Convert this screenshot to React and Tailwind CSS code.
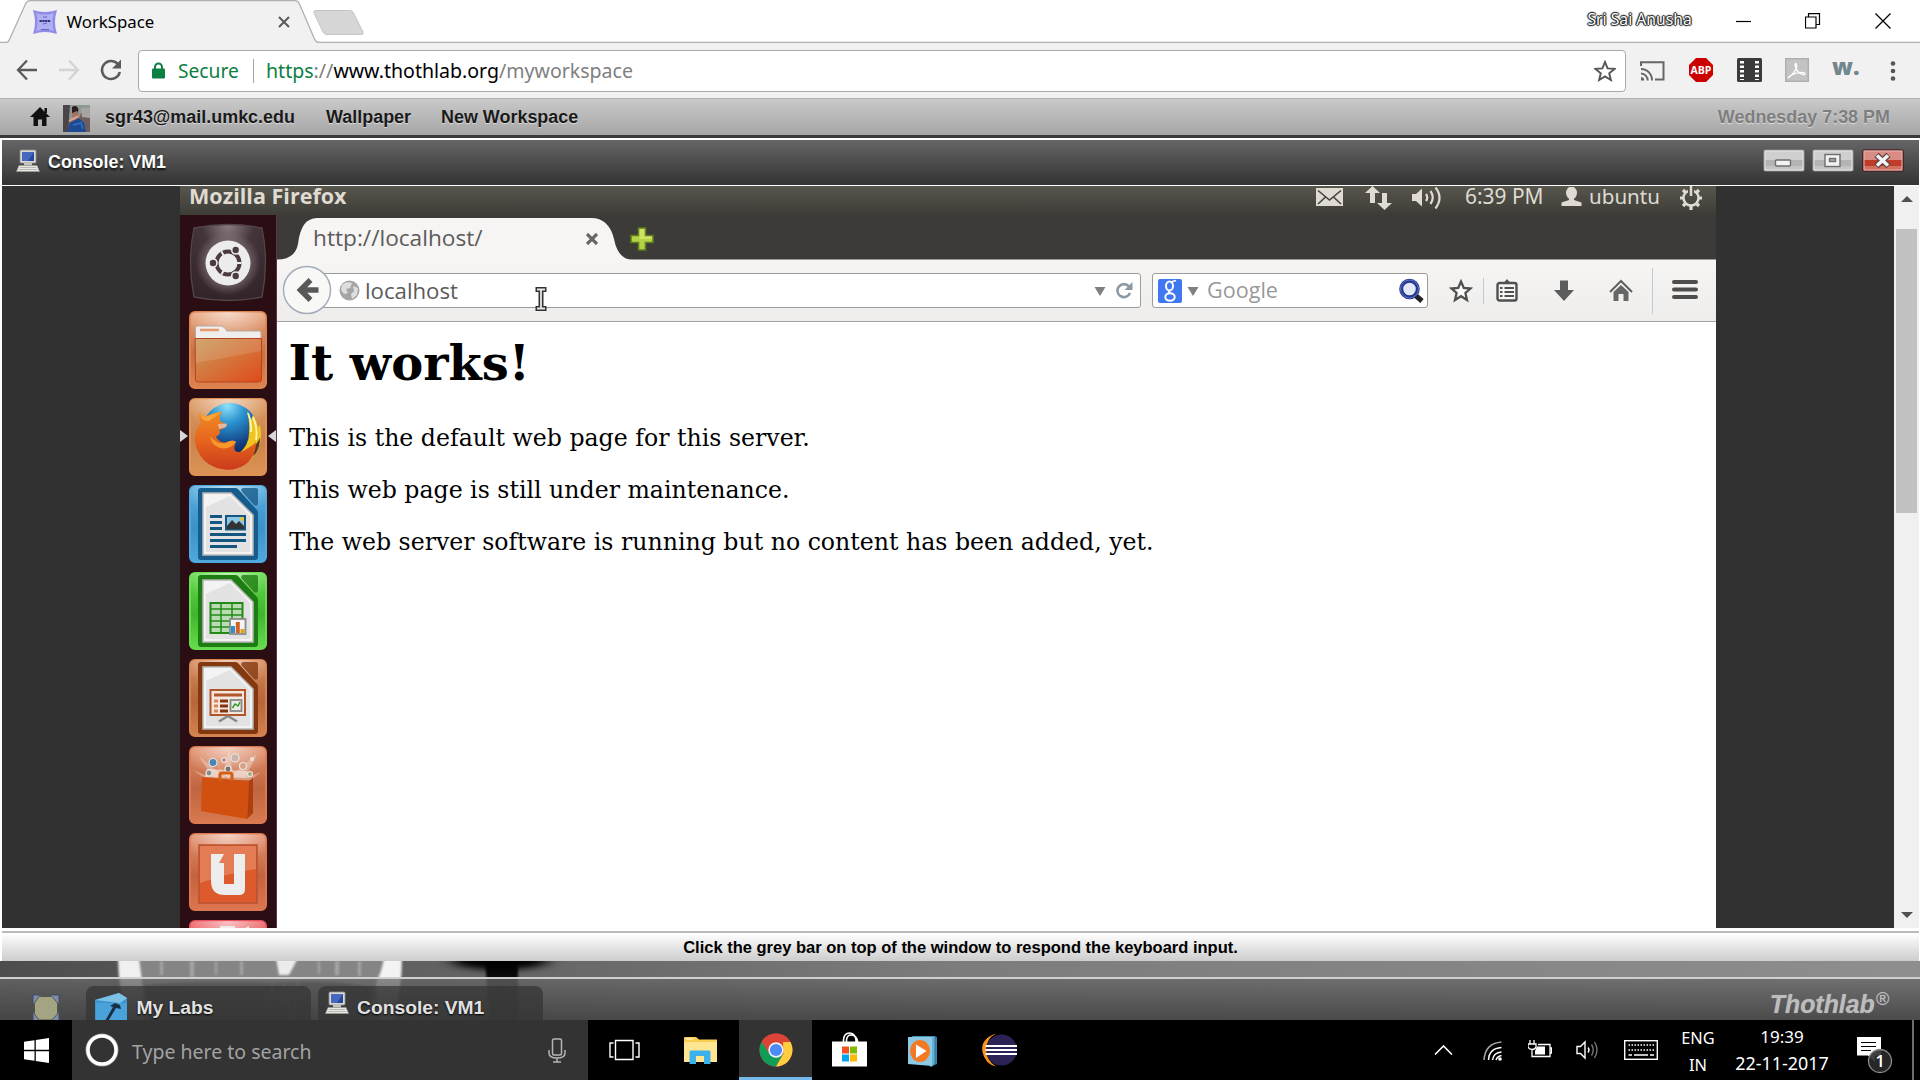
import React from "react";

const I = ({ w, h, className = "", vb, children }) => (
  <svg width={w} height={h} viewBox={vb || `0 0 ${w} ${h}`} className={`shrink-0 ${className}`} fill="none">
    {children}
  </svg>
);

/* ---------- Browser chrome ---------- */

function TabStrip() {
  return (
    <div className="relative flex h-[43px] shrink-0 items-center bg-white">
      <svg className="absolute left-0 top-0" width="1920" height="43" viewBox="0 0 1920 43" fill="none">
        <path d="M0 42.5H6Q8.500 42.500 9.500 39.500L25.500 4Q27 .7 30 .7H295Q298 .7 299.500 4L314.500 39Q316 42.500 319 42.500H1920V43H0Z" fill="#f1f1f1" />
        <path d="M0 42.500H6Q8.500 42.500 9.500 39.500L25.500 4Q27 .7 30 .7H295Q298 .7 299.500 4L314.500 39Q316 42.500 319 42.500H1920" stroke="#b0b0b0" strokeWidth="1.300" />
        <path d="M316 10.500H350Q352.500 10.500 353.500 13L363 32Q364 34.500 361 34.500H327Q324 34.500 323 32L314 13Q313 10.500 316 10.500Z" fill="#d6d6d6" stroke="#c4c4c4" />
      </svg>
      <I w={24} h={24} className="relative ml-[33px] mt-[1px]">
        <path d="M0 0Q12 4 24 0Q20 12 24 24Q12 20 0 24Q4 12 0 0Z" fill="#8f8ce8" />
        <path d="M3 3Q12 6 21 3Q18 12 21 21Q12 18 3 21Q6 12 3 3Z" fill="#b0aff3" />
        <path d="M10 7H14M10 14L14 13M8 19.500H16" stroke="#6a68c0" strokeWidth="1.200" />
        <path d="M6.500 11H17.500" stroke="#34327e" strokeWidth="2.200" strokeDasharray="2.300 .5" />
      </I>
      <span className="relative ml-[9.500px] w-[211px] whitespace-nowrap text-[16.800px] text-black">WorkSpace</span>
      <I w={12} h={12} className="relative mt-[1px]"><path d="M1 1L11 11M11 1L1 11" stroke="#5a5a5a" strokeWidth="2" /></I>
      <span className="relative mb-[4px] ml-[1298px] w-[104px] whitespace-nowrap text-[15.700px] text-white [text-shadow:0_0_1px_#111,0_0_2px_#222,1px_0_1px_#222,-1px_0_1px_#222,0_1px_1px_#222,0_-1px_1px_#222]">Sri Sai Anusha</span>
      <I w={16} h={16} className="relative ml-[44px]"><path d="M0 7.500H15" stroke="#000" strokeWidth="1.200" /></I>
      <I w={16} h={16} className="relative mb-[2px] ml-[53px]"><path d="M.5 4H11V15H.5ZM3.500 4V.7H14.500V11.500H11" stroke="#000" strokeWidth="1.200" /></I>
      <I w={16} h={16} className="relative mb-[2px] ml-[54px]"><path d="M.5 .5L15.500 15.500M15.500 .5L.5 15.500" stroke="#000" strokeWidth="1.300" /></I>
    </div>
  );
}

function Toolbar() {
  return (
    <div className="flex h-[55px] shrink-0 items-center bg-[#f1f1f1]">
      <I w={22} h={22} className="mb-[2px] ml-[16px]"><path d="M21 11H2M11 1.500L2 11L11 20.500" stroke="#5a5a5a" strokeWidth="2.300" /></I>
      <I w={22} h={22} className="mb-[2px] ml-[20px]"><path d="M1 11H20M11 1.500L20 11L11 20.500" stroke="#d3d3d3" strokeWidth="2.300" /></I>
      <I w={24} h={24} className="mb-[2px] ml-[19px]">
        <path d="M19.500 7A9 9 0 1 0 20.800 14" stroke="#5a5a5a" strokeWidth="2.500" />
        <path d="M22 1.500V10.500H13Z" fill="#5a5a5a" />
      </I>
      <div className="ml-[15px] flex h-[42px] w-[1488px] items-center rounded-[4px] border-[1.500px] border-[#a9a9a9] bg-white">
        <I w={13} h={17} className="mb-px ml-[13px]">
          <path d="M3 8V5A3.500 3.500 0 0 1 10 5V8" stroke="#0b8043" strokeWidth="2" />
          <rect y="6.500" width="13" height="10" rx="1" fill="#0b8043" />
        </I>
        <span className="ml-[13px] mt-px w-[75px] text-[19.200px] text-[#0b8043]">Secure</span>
        <div className="mr-[12px] h-[24px] w-px bg-[#a5a5a5]" />
        <span className="mt-px w-[1328px] whitespace-nowrap text-[19.560px] text-black">
          <span className="text-[#0b8043]">https</span><span className="text-[#808080]">://</span>www.thothlab.org<span className="text-[#808080]">/myworkspace</span>
        </span>
        <I w={22} h={22}>
          <path d="M11 2L13.600 8.400L20.500 8.900L15.200 13.300L16.900 20L11 16.400L5.100 20L6.800 13.300L1.500 8.900L8.400 8.400Z" stroke="#555" strokeWidth="1.900" />
        </I>
      </div>
      <I w={25} h={20} className="ml-[14px]">
        <path d="M1 5V1.200H23.500V18.500H15" stroke="#666" strokeWidth="2" />
        <path d="M1 8A11 11 0 0 1 12 19.500M1 12.500A7 7 0 0 1 7.700 19.500" stroke="#666" strokeWidth="1.900" />
        <path d="M1 16V19.500H4.300A3.500 3.500 0 0 0 1 16Z" fill="#666" />
      </I>
      <I w={26} h={26} className="mb-px ml-[23px]">
        <path d="M8 1H18L25 8V18L18 25H8L1 18V8Z" fill="#cd0000" />
        <text x="13" y="17" textAnchor="middle" fontSize="10.500" fontWeight="bold" fontFamily="Open Sans" fill="#fff" textLength="21" lengthAdjust="spacingAndGlyphs">ABP</text>
      </I>
      <I w={25} h={24} className="mb-px ml-[23px]">
        <rect width="25" height="24" rx="1.500" fill="#3b3b3b" />
        <path d="M5 3V22M20 3V22" stroke="#fff" strokeWidth="4" strokeDasharray="2.500 2" />
      </I>
      <I w={24} h={24} className="mb-px ml-[23px]">
        <rect x=".7" y=".7" width="22.600" height="22.600" fill="#c3c3c3" stroke="#aeaeae" strokeWidth="1.400" />
        <path d="M4 19C9 16 12.500 10 11.500 6.500C11 4.500 9.500 5.500 10.200 8C11.500 12.500 14 15.500 18 16.500C21 17 20.500 14.500 17.500 14.300C13 14.200 9 15.500 5.500 17.500C3.500 18.800 3.500 20 4.500 19Z" stroke="#fff" strokeWidth="1.300" />
      </I>
      <span className="mb-[9px] ml-[23px] w-[26px] font-['Open_Sans'] text-[23px] font-extrabold leading-none text-[#71868f]">w.</span>
      <I w={6} h={20} className="ml-[32px]"><g fill="#555"><circle cx="3" cy="2.500" r="2.300" /><circle cx="3" cy="10" r="2.300" /><circle cx="3" cy="17.500" r="2.300" /></g></I>
    </div>
  );
}

/* ---------- Thothlab desktop ---------- */

const Computer = () => (
  <I w={24} h={24}>
    <rect x="4" y="1" width="16" height="13" rx="1" fill="#d9d9d4" stroke="#8f8f8a" strokeWidth=".8" />
    <rect x="6" y="3" width="12" height="9" fill="#27479f" />
    <path d="M6 3H18L12 12H6Z" fill="#4668bd" />
    <path d="M8 14H16V16.500H8Z" fill="#c4c4be" />
    <path d="M3 16.500H21L23.500 22.500H.5Z" fill="#e9e9e4" stroke="#999" strokeWidth=".7" />
    <path d="M4 18.500H20M3 20.500H21" stroke="#b9b9b4" />
  </I>
);

function MenuBar() {
  return (
    <div className="flex h-[37px] shrink-0 items-center border-t border-[#b0b0b0] bg-gradient-to-b from-[#c9c9c9] to-[#a6a6a6] font-['Liberation_Sans',sans-serif] text-[17.950px] font-bold text-[#1a1a1a]">
      <I w={20} h={19} className="mb-[2px] ml-[30px]"><path d="M10 0L20 10H16.500V19H12V12.500H8V19H3.500V10H0Z" fill="#111" /><path d="M14.500 1H17V6H14.500Z" fill="#111" /></I>
      <I w={27} h={27} className="ml-[13px] mt-[2px]">
        <rect width="27" height="27" fill="#6d5e60" />
        <path d="M0 0H27V9L18 8L16 14H0Z" fill="#8c9a93" />
        <path d="M18 3H27V13L19 12Z" fill="#a9a39f" />
        <path d="M0 0H7L5 27H0Z" fill="#4b4448" />
        <path d="M9 2Q14 -1 15.500 5L14 9H9Z" fill="#2a1d1f" />
        <path d="M9 8L14 6L17 13L10 16Z" fill="#a8705f" />
        <path d="M4 27L7 18L16 13L21 18L23 27H4Z" fill="#1e4a92" />
        <path d="M6 16L12 13L15 11" stroke="#d7a995" strokeWidth="2" />
        <path d="M10 20L18 18L20 24" stroke="#3570c4" strokeWidth="1.500" />
      </I>
      <span className="ml-[15px] w-[221px] [text-shadow:0_1px_1px_#ddd]">sgr43@mail.umkc.edu</span>
      <span className="w-[115px] [text-shadow:0_1px_1px_#ddd]">Wallpaper</span>
      <span className="[text-shadow:0_1px_1px_#ddd]">New Workspace</span>
      <span className="ml-auto mr-[30px] text-[#7e7e7e] [text-shadow:0_1px_1px_#ddd]">Wednesday 7:38 PM</span>
    </div>
  );
}

function WinButton({ red, className = "", children }) {
  return (
    <I w={42} h={23} className={className}>
      <rect x="1" y="1" width="40" height="21" rx="1.500" fill={red ? "#d98b84" : "#cfcfcf"} stroke={red ? "#3a0a12" : "#8a8a8a"} strokeWidth="1.200" />
      <rect x="2" y="11" width="38" height="10" fill={red ? "#bf3c28" : "#b4b4b4"} />
      <rect x="2" y="17" width="38" height="4" fill={red ? "#d4705f" : "#c4c4c4"} />
      <rect x="2" y="2" width="38" height="19" stroke={red ? "#eab3ad" : "#e4e4e4"} />
      {children}
    </I>
  );
}

function TitleBar() {
  return (
    <div className="ml-[2px] mr-px flex h-[45px] shrink-0 items-center bg-gradient-to-b from-[#666] to-[#333]">
      <div className="mb-[4px] ml-[14px]"><Computer /></div>
      <span className="mb-px ml-[8px] font-['Liberation_Sans',sans-serif] text-[17.850px] font-bold text-white [text-shadow:0_2px_2px_#111]">Console: VM1</span>
      <WinButton className="mb-[5px] ml-auto"><rect x="12.500" y="11" width="15" height="6" rx="1" fill="#f2f2f2" stroke="#6d6d6d" strokeWidth="1.400" /></WinButton>
      <WinButton className="mb-[5px] ml-[7px]">
        <rect x="13" y="5.500" width="15" height="12" fill="#f2f2f2" stroke="#6d6d6d" strokeWidth="1.400" />
        <rect x="17.500" y="9.500" width="6" height="3" fill="#aaa" stroke="#6d6d6d" strokeWidth="1.400" />
      </WinButton>
      <WinButton red className="mb-[5px] ml-[8px] mr-[15px]">
        <path d="M14.500 6L26.500 17M26.500 6L14.500 17" stroke="#5b4347" strokeWidth="6" />
        <path d="M15 6.500L26 16.500M26 6.500L15 16.500" stroke="#f3f3f3" strokeWidth="3.600" />
      </WinButton>
    </div>
  );
}

/* ---------- Ubuntu launcher ---------- */

const Tile = ({ id, c1, c2, c3, children, className = "" }) => (
  <I w={78} h={78} className={className}>
    <defs>
      <linearGradient id={id} x1="0" y1="0" x2="0" y2="1">
        <stop offset="0" stopColor={c1} /><stop offset=".55" stopColor={c2} /><stop offset="1" stopColor={c3} />
      </linearGradient>
      <radialGradient id={id + "g"} cx=".5" cy="0" r=".6">
        <stop offset="0" stopColor="#fff" stopOpacity=".6" /><stop offset="1" stopColor="#fff" stopOpacity="0" />
      </radialGradient>
    </defs>
    <rect x="1" y="1" width="76" height="76" rx="5" fill={`url(#${id})`} stroke={c3} strokeWidth="2" />
    <rect x="1" y="1" width="76" height="50" rx="5" fill={`url(#${id}g)`} />
    {children}
  </I>
);

const Doc = ({ frame }) => (
  <g>
    <path d="M9 6Q9 3 12 3H46Q48 3 49 4L68 25Q69 26 69 28V72Q69 75 66 75H12Q9 75 9 72Z" fill={frame} />
    <path d="M14 8H42L64 30V70H14Z" fill="#f3f3f3" stroke="#b8b8b8" strokeWidth="1.500" />
    <path d="M17 22L41 11L61 31V67H17Z" fill="#d4d4d4" opacity=".55" />
    <path d="M54 3H67Q69 3 69 5V19Q68 22 65 20L53 7Q51 4 54 3Z" fill={frame} opacity=".8" />
  </g>
);

function Launcher() {
  return (
    <div className="relative flex h-full w-[97px] shrink-0 flex-col items-center gap-[9px] overflow-hidden border-r border-[#5f3349] bg-[#2b0d14] pt-[9px]">
      <I w={78} h={79} className="-mt-px">
        <defs>
          <radialGradient id="bfb" cx=".5" cy="0" r="1"><stop offset="0" stopColor="#8a7d80" /><stop offset=".35" stopColor="#44353a" /><stop offset="1" stopColor="#33242a" /></radialGradient>
          <radialGradient id="bfbg"><stop offset=".55" stopColor="#8a7d80" stopOpacity=".7" /><stop offset=".95" stopColor="#8a7d80" stopOpacity="0" /></radialGradient>
        </defs>
        <path d="M5 5Q39 -2 73 5Q80 39 73 74Q39 81 5 74Q-2 39 5 5Z" fill="url(#bfb)" stroke="#53444a" strokeWidth="1.300" />
        <circle cx="39" cy="40" r="34" fill="url(#bfbg)" />
        <circle cx="39" cy="40" r="22.500" fill="#ececec" />
        <circle cx="39" cy="40" r="11.500" stroke="#4b3a3f" strokeWidth="4" />
        <path d="M52.500 40H48M32.300 28.300L34.500 32.300M32.300 51.700L34.500 47.700" stroke="#ececec" strokeWidth="2" />
        <circle cx="24" cy="40" r="4.800" fill="#ececec" /><circle cx="46.700" cy="27" r="4.800" fill="#ececec" /><circle cx="46.700" cy="53" r="4.800" fill="#ececec" />
        <circle cx="24" cy="40" r="3.200" fill="#4b3a3f" /><circle cx="46.700" cy="27" r="3.200" fill="#4b3a3f" /><circle cx="46.700" cy="53" r="3.200" fill="#4b3a3f" />
      </I>
      <Tile id="t1" c1="#e8a47c" c2="#c56f42" c3="#dc8350">
        <defs>
          <linearGradient id="fold" x1="0" y1="0" x2="1" y2="1"><stop offset="0" stopColor="#c89a5c" /><stop offset=".5" stopColor="#d5743a" /><stop offset="1" stopColor="#e04a1c" /></linearGradient>
        </defs>
        <path d="M6.500 17Q6.500 15 8.500 15H32Q35 15 38 20H71Q72 20 72 22V28H6.500Z" fill="#f0eeec" stroke="#b7a79e" />
        <path d="M11 19H30" stroke="#e79a6e" strokeWidth="2.500" />
        <path d="M6 27.500H72.500V68Q72.500 71 70 71H9Q6.500 71 6.500 68Z" fill="url(#fold)" stroke="#b9431c" />
        <path d="M7 28H72V40L7 52Z" fill="#fff" opacity=".12" />
      </Tile>
      <Tile id="t2" c1="#dd9a63" c2="#c9834b" c3="#de9355">
        <defs>
          <radialGradient id="globe" cx=".45" cy=".05" r=".9"><stop offset="0" stopColor="#8fe2fa" /><stop offset=".35" stopColor="#2b93cf" /><stop offset=".8" stopColor="#123d80" /><stop offset="1" stopColor="#0c2458" /></radialGradient>
          <linearGradient id="fox" x1="0" y1="0" x2="0" y2="1"><stop offset="0" stopColor="#f08b24" /><stop offset=".5" stopColor="#e6641e" /><stop offset="1" stopColor="#cb3a1c" /></linearGradient>
        </defs>
        <circle cx="41" cy="33" r="28" fill="url(#globe)" />
        <path d="M58 13Q61 17 62 22L64 17Q68 22 69 29L71 27Q74 40 69 51Q65 60 56 66L48 57Q61 48 60 33Q61 24 58 13Z" fill="#f0c41f" />
        <path d="M59 15Q63 24 62 34M64 19Q69 30 67 42" stroke="#fdf5b0" strokeWidth="1.800" />
        <path d="M66 48L71 40Q71 48 67 55L64 58Z" fill="#5b3a23" />
        <path d="M11 14Q13 19 18 18Q25 14 33 14Q30 19 31 23L38 27Q36 31 30 32Q33 35 27 39Q31 46 38 44Q44 41 47 44Q42 55 52 54Q62 49 67 44Q67 58 57 66Q44 75 28 70Q10 64 6 44Q5 32 12 25Q9 20 11 14Z" fill="url(#fox)" />
        <path d="M11 14Q13 20 19 18Q26 15 32 14Q25 20 20 23Q12 24 11 14Z" fill="#f6a73a" />
        <path d="M21 38Q28 47 37 45Q43 41 47 44Q41 52 31 50Q22 47 21 38Z" fill="#f59a2a" />
        <path d="M29 26L38 25.500L37 29L30 31Z" fill="#e9b79d" />
      </Tile>
      <Tile id="t3" c1="#5aaede" c2="#3b92c9" c3="#4fa9de">
        <Doc frame="#155c8c" />
        <path d="M21 31.500H33M21 37.500H33M21 43.500H33M21 49.500H57M21 55.500H57M21 61.500H48" stroke="#14567f" strokeWidth="3" />
        <rect x="37" y="31" width="19" height="13.500" fill="#8cc7e8" stroke="#14567f" strokeWidth="2" />
        <path d="M38 44V41L43 35L47 39L50 36L55 41V44Z" fill="#333" /><circle cx="53" cy="34" r="2" fill="#e8c52a" />
      </Tile>
      <Tile id="t4" c1="#63d84c" c2="#41b52c" c3="#68dc4f">
        <Doc frame="#1e7d12" />
        <rect x="21.500" y="31" width="32" height="30" fill="#b9dcb2" stroke="#238a18" strokeWidth="2" />
        <path d="M21 37H54M21 43H54M21 49H54M21 55H54M32 31V61M43 31V61" stroke="#238a18" strokeWidth="1.500" />
        <rect x="41" y="47" width="15.500" height="15" fill="#f5f5f5" stroke="#8b8b8b" strokeWidth="1.800" />
        <path d="M44 61V54" stroke="#2f8fd0" strokeWidth="4" /><path d="M48.800 61V50" stroke="#d0631e" strokeWidth="4" /><path d="M53.500 61V57" stroke="#dba714" strokeWidth="4" />
      </Tile>
      <Tile id="t5" c1="#d68a5a" c2="#b4663a" c3="#d5834f">
        <Doc frame="#84380f" />
        <rect x="21.500" y="31" width="34.500" height="25" fill="#f4e7de" stroke="#b2552a" strokeWidth="2" />
        <path d="M25 36H53" stroke="#b2552a" strokeWidth="3" />
        <path d="M25 42H29M25 47H29M25 52H29" stroke="#dd8553" strokeWidth="3" /><path d="M31 42H39M31 47H39M31 52H39" stroke="#83330f" strokeWidth="3" />
        <rect x="41.500" y="41" width="11" height="11" fill="#e8eee5" stroke="#888" strokeWidth="1.800" /><path d="M43.500 49L46 45L49 47L51 43" stroke="#36952a" strokeWidth="1.500" />
        <path d="M39 57L30 62.500M39 57L48 62.500" stroke="#888" strokeWidth="2.500" />
      </Tile>
      <Tile id="t6" c1="#e2906c" c2="#bf6540" c3="#d97a50">
        <path d="M39 34L10 10L24 32L4 24L18 34H62L72 26L56 32L68 8L44 28L40 4L34 28L20 5Z" fill="#fff" opacity=".3" />
        <path d="M16 31L60 32L58 25L18 23Z" fill="#fff" opacity=".5" />
        <g stroke="#e9e4e0" strokeWidth="1.200"><circle cx="24" cy="16.500" r="4" fill="#4886b8" /><circle cx="46" cy="12" r="4" fill="#c9b3aa" /><circle cx="35" cy="14" r="2.300" fill="#b7806d" /><circle cx="54" cy="20" r="3.500" fill="#d6a184" /><circle cx="20" cy="27" r="3" fill="#8a8f8d" /><circle cx="39" cy="23" r="3" fill="#77706f" /><circle cx="61" cy="28" r="2.500" fill="#a4aa7e" /><circle cx="63" cy="13" r="1.500" fill="#e6d4cc" /></g>
        <path d="M13 31L60 35L58 73L12 65Z" fill="#d2500f" />
        <path d="M60 35L64 32V67L58 73Z" fill="#b03f0e" />
        <path d="M31 35V29Q31 27 33 27H41Q43 27 43 29V35" stroke="#d65f17" strokeWidth="3.200" />
      </Tile>
      <Tile id="t7" c1="#e39170" c2="#c3633d" c3="#dc7650">
        <rect x="10" y="12" width="58" height="58" fill="#dc5a2b" stroke="#b9512f" strokeWidth="1.500" />
        <path d="M11 13H67V36Q40 40 11 50Z" fill="#e58a66" opacity=".7" />
        <path d="M22 21H35L30 30H35V51H45V21H56V56Q56 62 50 62H36Q22 62 22 48Z" fill="#ededed" />
      </Tile>
      <Tile id="t8" c1="#f0686c" c2="#d23c44" c3="#e8505a"><path d="M31 6H46V20H31ZM52 10L60 6V16Z" fill="#eee" /></Tile>
      <svg className="absolute left-0 top-[214px]" width="9" height="14"><path d="M0 1L8 7L0 13Z" fill="#d8d8d8" /></svg>
      <svg className="absolute right-0 top-[214px]" width="9" height="14"><path d="M9 1L1 7L9 13Z" fill="#d8d8d8" /></svg>
    </div>
  );
}

/* ---------- Remote Firefox window ---------- */

function UbuntuPanel() {
  return (
    <div className="flex h-[29px] shrink-0 items-start bg-gradient-to-b from-[#58564d] to-[#3d3c37] text-[#dfdbd2]">
      <span className="ml-[9px] h-[20px] w-[1127px] font-['Open_Sans',sans-serif] text-[21.550px] font-bold leading-[20px]">Mozilla Firefox</span>
      <I w={27} h={18} className="mt-[2px]"><rect width="27" height="18" fill="#dfdbd2" /><path d="M2 2.500L13.500 12L25 2.500M2 16L9.500 9M25 16L17.500 9" stroke="#45433d" strokeWidth="1.600" /></I>
      <I w={27} h={24} className="ml-[22px]"><path d="M7.500 0L15 7H10V17H5V7H0ZM19.500 24L12 17H17V7H22V17H27Z" fill="#dfdbd2" /></I>
      <I w={31} h={25} className="ml-[20px]">
        <path d="M0 8H4L10 2.500V20.500L4 15H0Z" fill="#dfdbd2" />
        <path d="M14 8Q16.500 11.500 14 15M18.500 5Q23 11.500 18.500 18M23.500 1.500Q31.500 11.500 23.500 22.500" stroke="#dfdbd2" strokeWidth="2.200" />
      </I>
      <span className="ml-[22px] w-[96px] whitespace-nowrap text-[20.900px] leading-[20px]">6:39 PM</span>
      <I w={21} h={19} className="mt-px"><ellipse cx="10.500" cy="6" rx="5.500" ry="6.500" fill="#dfdbd2" /><path d="M8 9H13V13L20.500 15.500V19H.5V15.500L8 13Z" fill="#dfdbd2" /></I>
      <span className="ml-[7px] w-[90px] text-[20.600px] leading-[20px]">ubuntu</span>
      <I w={24} h={24}>
        <circle cx="12" cy="12" r="7.500" stroke="#dfdbd2" strokeWidth="2.500" />
        <path d="M12 19V24M1 12H5M19 12H23M4 4L7 7M20 4L17 7M4 20L7 17M20 20L17 17" stroke="#dfdbd2" strokeWidth="3.200" />
        <path d="M12 0V10" stroke="#4c4a43" strokeWidth="6" /><path d="M12 0V10" stroke="#dfdbd2" strokeWidth="2.600" />
      </I>
    </div>
  );
}

function FirefoxTabs() {
  return (
    <div className="relative flex h-[45px] shrink-0 items-center bg-[#3c3b37]">
      <svg className="absolute left-0 top-0" width="1439" height="45" viewBox="0 0 1439 45" fill="none">
        <path d="M0 44.500Q18 44.500 21 29Q24 3 40 3H314Q332 3 337 24Q341 44.500 355 44.500H1439V45H0Z" fill="#f6f5f4" />
      </svg>
      <span className="relative ml-[36px] mt-px w-[273px] text-[22.650px] text-[#5b5b5b]">http://localhost/</span>
      <I w={12} h={12} className="relative mt-[3px]"><path d="M1 1L11 11M11 1L1 11" stroke="#666" strokeWidth="3.200" /></I>
      <I w={24} h={24} className="relative ml-[32px] mt-[3px]"><path d="M8.500 1H15.500V8.500H23V15.500H15.500V23H8.500V15.500H1V8.500H8.500Z" fill="#b4d344" stroke="#5f7d20" strokeWidth="1.600" /><path d="M9.500 2H14.500V9.500H22V12H9.500Z" fill="#dcec74" opacity=".6" /></I>
    </div>
  );
}

const Caret = ({ className }) => (
  <I w={12} h={9} className={className}><path d="M.5 0H11.500L6 9Z" fill="#808080" /></I>
);

function FirefoxNav() {
  return (
    <div className="relative flex h-[62px] shrink-0 items-center border-b-[1.500px] border-[#a3a3a3] bg-gradient-to-b from-[#f6f5f4] to-[#eeedeb]">
      <div className="ml-[38px] flex h-[35px] w-[826px] items-center rounded-r-[3px] border-[1.500px] border-[#9c9c9c] bg-white">
        <I w={21} h={21} className="ml-[23px]">
          <circle cx="10.500" cy="10.500" r="10" fill="#a5a5a5" />
          <path d="M3 5Q7 1 13 3L11 8L7 9L9 13L5 14L2 10ZM14 6L19 8L18 15L13 19L12 14L15 11Z" fill="#dedede" />
        </I>
        <span className="ml-[5px] w-[729px] text-[22.200px] text-[#5b5b5b]">localhost</span>
        <Caret className="mt-[2px]" />
        <I w={17} h={17} className="ml-[10px]"><path d="M13 4.500A6.500 6.500 0 1 0 14 11" stroke="#8b99a3" strokeWidth="2.600" /><path d="M16.500 0V8H8.500Z" fill="#8b99a3" /></I>
      </div>
      <I w={50} h={50} className="absolute left-[5px] top-[5px]"><circle cx="25" cy="25" r="23.500" fill="#f8f8f7" stroke="#a3aeba" strokeWidth="1.500" /><path d="M36.500 25H20M28.500 15L18.500 25L28.500 35" stroke="#585858" strokeWidth="5.500" /></I>
      <div className="ml-[11px] flex h-[35px] w-[276px] items-center rounded-[3px] border-[1.500px] border-[#9c9c9c] bg-white">
        <div className="ml-[5px] flex h-[24px] w-[24px] items-center justify-center rounded-[2px] bg-[#4078f2]">
          <I w={16} h={24}><ellipse cx="7.500" cy="7" rx="3.500" ry="4.500" stroke="#fff" strokeWidth="2" /><path d="M9 3L14 1.500M8 11.500Q5 13 9 14.500" stroke="#fff" strokeWidth="1.800" /><ellipse cx="8" cy="18" rx="4.700" ry="3.800" stroke="#fff" strokeWidth="2" /></I>
        </div>
        <Caret className="ml-[5px] mt-[2px]" />
        <span className="ml-[8px] w-[191px] text-[21.600px] text-[#999]">Google</span>
        <I w={26} h={26}><path d="M17 17L24 23" stroke="#222" strokeWidth="5" /><circle cx="11.500" cy="11" r="8.300" fill="#e3e8f7" stroke="#26398b" strokeWidth="4" /><circle cx="11.500" cy="11" r="9" stroke="#5c78cf" strokeWidth="1" /></I>
      </div>
      <I w={24} h={24} className="ml-[21px]"><path d="M12 2.500L14.800 9L21.500 9.500L16.400 14L18 21L12 17.200L6 21L7.600 14L2.500 9.500L9.200 9Z" fill="#fafafa" stroke="#505050" strokeWidth="2.300" /></I>
      <div className="ml-[10px] h-[26px] w-px bg-[#c1cad3]" />
      <I w={22} h={24} className="mb-px ml-[12px]">
        <rect x="1.500" y="5" width="19" height="17.500" rx="2" fill="#f5f5f5" stroke="#505050" strokeWidth="2.400" /><path d="M6 6V4H8.500L11 1L13.500 4H16V6Z" fill="#505050" />
        <path d="M4 10H6.500M4 14H6.500M4 18H6.500M8.500 10H18M8.500 14H18M8.500 18H18" stroke="#505050" strokeWidth="1.800" />
      </I>
      <I w={22} h={24} className="ml-[35px]"><path d="M7 1.500H15V11H21L11 22L1 11H7Z" fill="#5c5c5c" /></I>
      <I w={24} h={24} className="ml-[34px]"><path d="M1 13L12 2L23 13" stroke="#606060" strokeWidth="2" /><path d="M4.500 13L12 6L19.500 13V22H14.500V15H9.500V22H4.500Z" fill="#666" /></I>
      <div className="ml-[19px] h-[46px] w-px bg-[#c1cad3]" />
      <I w={26} h={22} className="mb-[2px] ml-[19px]"><path d="M2 3H24M2 10.500H24M2 18H24" stroke="#4d4d4d" strokeWidth="4" strokeLinecap="round" /></I>
      <svg className="absolute left-[257px] top-[26px]" width="14" height="26" fill="none">
        <path d="M1.500 3.500H12.500M1.500 22.500H12.500M7 3V23" stroke="#333" strokeWidth="5" /><path d="M3 3.500H11M3 22.500H11M7 3V23" stroke="#e8e8e8" strokeWidth="1.800" />
      </svg>
    </div>
  );
}

function Console() {
  return (
    <div className="ml-[2px] mr-px flex h-[742px] shrink-0 bg-[#313131]">
      <div className="ml-[178px] flex h-full w-[1536px] flex-col">
        <UbuntuPanel />
        <div className="flex h-[713px] overflow-hidden">
          <Launcher />
          <div className="flex w-[1439px] flex-col bg-white font-['DejaVu_Serif',serif] text-black">
            <div className="font-['Open_Sans',sans-serif]"><FirefoxTabs /><FirefoxNav /></div>
            <h1 className="ml-[11.500px] mt-[13px] text-[48px] font-bold leading-[56px]">It works!</h1>
            <p className="ml-[12.300px] mt-[32.500px] text-[23.640px] leading-[28px]">This is the default web page for this server.</p>
            <p className="ml-[12.300px] mt-[24px] text-[23.640px] leading-[28px]">This web page is still under maintenance.</p>
            <p className="ml-[12.300px] mt-[24.700px] text-[23.640px] leading-[28px]">The web server software is running but no content has been added, yet.</p>
          </div>
        </div>
      </div>
      <div className="ml-auto flex h-full w-[25px] flex-col items-center bg-[#f0f0f0]">
        <I w={12} h={6} className="mt-[10px]"><path d="M6 0L12 6H0Z" fill="#505050" /></I>
        <div className="mt-[27px] h-[284px] w-[21px] bg-[#c1c1c1]" />
        <I w={12} h={6} className="mb-[10px] mt-auto"><path d="M0 0H12L6 6Z" fill="#505050" /></I>
      </div>
    </div>
  );
}

/* ---------- Wallpaper strip and dock ---------- */

function Dock() {
  return (
    <div className="relative h-[59px] shrink-0 overflow-hidden bg-gradient-to-r from-[#4d4d4d] via-[#7c7c7c] to-[#8e8e8e] font-['Liberation_Sans',sans-serif] font-bold">
      <svg className="absolute left-0 top-0" width="700" height="59" viewBox="0 0 700 59">
        <defs>
          <filter id="soft"><feGaussianBlur stdDeviation="1.300" /></filter>
          <filter id="soft2" x="-30%" y="-50%" width="160%" height="200%"><feGaussianBlur stdDeviation="9 3" /></filter>
        </defs>
        <path d="M120 -5H395V65H130Z" fill="#858585" filter="url(#soft)" />
        <path d="M144 24Q200 19 272 22Q330 18 372 26V65H150Z" fill="#3a3a3a" filter="url(#soft)" />
        <g filter="url(#soft)">
          <path d="M118 -3H139L142 20Q143 40 150 62H130Q118 30 118 -3Z" fill="#f0f0f0" />
          <path d="M276 -3H298L289 14H279Z" fill="#ececec" />
          <path d="M384 -3H402Q402 30 392 62H378L376 22Q382 10 384 -3Z" fill="#f3f3f3" />
          <path d="M160 0H163V14H160ZM190 0H194V16H190ZM215 0H217V14H215ZM240 0H243V14H240ZM318 0H320V13H318ZM335 0H339V14H335ZM358 0H361V15H358Z" fill="#a5a5a5" />
          <path d="M272 18V59M284 20L290 59M298 20L294 59" stroke="#777" strokeWidth="1.200" fill="none" />
        </g>
        <ellipse cx="500" cy="0" rx="48" ry="9" fill="#000" filter="url(#soft2)" />
        <path d="M485 0H518V59H490Z" fill="#000" filter="url(#soft)" opacity=".9" />
      </svg>
      <div className="relative mt-[16px] flex h-[43px] items-start border-t-2 border-[#cfcfcf] bg-gradient-to-b from-[#666]/75 to-[#444]/90">
        <I w={28} h={28} className="ml-[32px] mt-[15px]">
          <rect x="1" y="1" width="9" height="9" fill="#7f8cb0" stroke="#3f4a66" /><rect x="18" y="1" width="9" height="9" fill="#7f8cb0" stroke="#3f4a66" />
          <rect x="1" y="18" width="9" height="9" fill="#7f8cb0" stroke="#3f4a66" /><rect x="18" y="18" width="9" height="9" fill="#7f8cb0" stroke="#3f4a66" />
          <path d="M7 2.500H20L25.500 9V20L20 26H7L2.500 20V9Z" fill="#a3a483" stroke="#55573f" />
        </I>
        <div className="ml-[26px] mt-[7px] flex h-[44px] w-[225px] items-center rounded-t-[8px] bg-[#333]/70 text-[19.250px] text-[#e2e2e2] [text-shadow:0_1px_2px_#000]">
          <I w={34} h={34} className="ml-[8px] mt-[4px]"><path d="M1 7L25 0L33 5V34H1Z" fill="#3f94cc" /><path d="M1 7L25 0L33 5L26 10Z" fill="#7cc0e6" /><path d="M2 10H33V34H2Z" fill="#4aa2da" /><path d="M16 13L21 10L26 12L27 16L22 15L13 30L11 28L19 14Z" fill="#1b2f42" /></I>
          <span className="ml-[8.500px] mt-px">My Labs</span>
        </div>
        <div className="ml-[7px] mt-[7px] flex h-[44px] w-[225px] items-center rounded-t-[8px] bg-[#333]/70 text-[19.250px] text-[#e2e2e2] [text-shadow:0_1px_2px_#000]">
          <div className="mb-[10px] ml-[7px]"><Computer /></div>
          <span className="ml-[8px] mt-px">Console: VM1</span>
        </div>
        <span className="ml-auto mr-[31px] mt-[11px] flex items-start text-[24.870px] italic leading-[28px] text-[#bdbdbd] [text-shadow:0_0_1px_#999]">Thothlab<span className="ml-px text-[18px] font-normal leading-[18px]">®</span></span>
      </div>
    </div>
  );
}

/* ---------- Windows taskbar ---------- */

function Taskbar() {
  return (
    <div className="flex h-[60px] shrink-0 items-center bg-black text-white">
      <div className="flex h-full w-[72px] items-center justify-center"><I w={25} h={25}><path d="M0 3.800L10.500 2.200V11.800H0ZM11.800 2L25 0V11.800H11.800ZM0 13.200H10.500V22.800L0 21.200ZM11.800 13.200H25V25L11.800 23Z" fill="#fff" /></I></div>
      <div className="flex h-full w-[516px] items-center bg-[#333]">
        <I w={34} h={34} className="ml-[13px]"><circle cx="17" cy="17" r="15.500" stroke="#999" strokeWidth="2" /><circle cx="17" cy="17" r="14" stroke="#fff" strokeWidth="3.500" /></I>
        <span className="ml-[13px] mt-[3px] w-[416px] text-[19.500px] text-[#a3a3a3]">Type here to search</span>
        <I w={18} h={25}><rect x="4.500" y="1" width="9" height="16" rx="1.500" stroke="#b5b5b5" strokeWidth="1.500" /><path d="M1 12V15Q1 20 9 20Q17 20 17 15V12M9 20V24M5 24H13" stroke="#b5b5b5" strokeWidth="1.500" /></I>
      </div>
      <I w={31} h={22} className="ml-[21px]"><path d="M6.500 1.500H24V20.500H6.500ZM4.500 4H1V18H4.500M26.500 4H30V18H26.500" stroke="#fff" strokeWidth="1.400" /></I>
      <I w={33} h={27} className="ml-[44px]"><path d="M0 1Q0 0 1 0H12L15 2.500H33V25H0Z" fill="#f9cf52" /><path d="M0 5H33V25H0Z" fill="#fee592" /><path d="M2 2H9" stroke="#fff" /><path d="M5.500 27V15Q5.500 13.500 7 13.500H25Q26.500 13.500 26.500 15V27H20V19H12V27Z" fill="#3db2ea" /></I>
      <div className="ml-[22px] flex h-full w-[73px] items-center justify-center border-b-[3px] border-[#76b9ed] bg-[#333] pt-[3px]">
        <I w={34} h={34}>
          <circle cx="17" cy="17" r="16.500" fill="#db4437" />
          <path d="M17 17L2.700 8.800A16.500 16.500 0 0 0 17 33.500L24.100 21Z" fill="#0f9d58" />
          <path d="M31.300 8.800A16.500 16.500 0 0 1 17 33.500L24.500 20.500L24 9Z" fill="#ffcd40" />
          <path d="M2.700 8.800A16.500 16.500 0 0 1 31.300 8.800L17 9.500L10 20Z" fill="#db4437" />
          <circle cx="17" cy="17" r="7.700" fill="#f1f1f1" /><circle cx="17" cy="17" r="6.100" fill="#4c8bf5" />
        </I>
      </div>
      <I w={35} h={35} className="mb-[2px] ml-[20px]">
        <path d="M11.500 11V8Q12 1 17.500 1Q23 1 24 8V11M14.500 11V8Q15 3 19 3Q25 3 26 11" stroke="#fff" strokeWidth="1.600" />
        <path d="M0 9.500H35V34.500H0Z" fill="#fff" />
        <path d="M10 14.500H17V21.500H10Z" fill="#f25022" /><path d="M18 14.500H25V21.500H18Z" fill="#7fba00" /><path d="M10 22.500H17V29.500H10Z" fill="#00a4ef" /><path d="M18 22.500H25V29.500H18Z" fill="#ffb900" />
      </I>
      <I w={30} h={31} className="ml-[41px] mt-[3px]"><path d="M8 1H29V28L24 30Z" fill="#3d84ac" /><path d="M4 0H27V28L23 31Z" fill="#64b1d5" stroke="#2f7398" /><path d="M0 1H24V30L0 28Z" fill="#8dc9e4" /><ellipse cx="12" cy="15" rx="10" ry="11" fill="#f37a22" /><path d="M8 8.500L18.500 15L8 22Z" fill="#fff" /></I>
      <I w={37} h={34} className="ml-[43px]"><circle cx="20.500" cy="17" r="15.500" fill="#2c2255" /><path d="M15 0.500Q-1 6 1.500 19Q4 31 15 33.500Q5 27 5 17Q5 6 15 .5Z" fill="#f7941e" /><path d="M4.500 13H36M4.500 17H36M4.500 21H36" stroke="#fff" strokeWidth="2.200" /></I>
      <I w={19} h={10} className="ml-[416px]"><path d="M1 9.500L9.500 1L18 9.500" stroke="#fff" strokeWidth="1.600" /></I>
      <I w={20} h={20} className="ml-[30px] mt-[2px]"><path d="M1 19Q2 2.500 18.500 1" stroke="#aaa" strokeWidth="1.500" /><path d="M5.500 19Q6 7.500 18.500 6.500M9.500 19Q10.500 11.500 18.500 11M13 19Q14 15.500 18.500 14.500" stroke="#fff" strokeWidth="1.500" /><circle cx="17" cy="18" r="1.800" fill="#fff" /></I>
      <I w={24} h={18} className="mb-[2px] ml-[25px]"><path d="M2 0V3.500M6 0V3.500M0 4H8V7Q7 9.500 4 9.500Q1 9.500 0 7ZM4 9.500V16.500H22V4.500H10M22 8H23.500V13H22" stroke="#fff" strokeWidth="1.300" /><path d="M9 6.500H17V14.500H7V11Z" fill="#fff" /></I>
      <I w={23} h={20} className="ml-[24px]"><path d="M1 6.500H4.500L9 2V18L4.500 13.500H1Z" stroke="#fff" strokeWidth="1.400" /><path d="M12 7.500Q14 10 12 12.500" stroke="#fff" strokeWidth="1.400" /><path d="M15.500 4.500Q19 10 15.500 15.500M18.500 2Q23.500 10 18.500 18" stroke="#777" strokeWidth="1.400" /></I>
      <I w={34} h={20} className="ml-[25px]"><rect x=".7" y=".7" width="32.600" height="18.600" stroke="#fff" strokeWidth="1.400" /><path d="M4.500 5H30M4.500 10H30" stroke="#fff" strokeWidth="1.400" strokeDasharray="1.500 1.500" /><path d="M4.500 15H8M10 15H24M26 15H30" stroke="#fff" strokeWidth="1.400" /></I>
      <div className="ml-[16px] mt-px flex w-[48px] flex-col items-center text-[16.400px] leading-[27px]"><span>ENG</span><span>IN</span></div>
      <div className="ml-[7px] flex w-[106px] flex-col items-center whitespace-nowrap text-[17.900px] leading-[27px]"><span className="text-[17px]">19:39</span><span>22-11-2017</span></div>
      <I w={38} h={38} className="ml-[20px] mt-[10px]"><path d="M2 1H26V19.500H20V26L13 19.500H2Z" fill="#fff" /><path d="M6 6.500H21M6 10.500H21M6 14.500H16" stroke="#000" strokeWidth="1.200" /><circle cx="25" cy="25" r="11.500" fill="#2b2b2b" fillOpacity=".9" stroke="#8a8a8a" strokeWidth="1.300" /><text x="25" y="31" textAnchor="middle" fontSize="17" fontFamily="Open Sans" fontWeight="600" fill="#fff">1</text></I>
      <div className="ml-auto mr-[6px] h-full w-[2px] bg-[#6d6d6d]" />
    </div>
  );
}

export default function App() {
  return (
    <div className="flex h-[1080px] w-[1920px] flex-col overflow-hidden bg-white font-['Noto_Sans','Open_Sans',sans-serif]">
      <TabStrip />
      <Toolbar />
      <MenuBar />
      <div className="mb-[2px] h-[3px] shrink-0 bg-[#3a3a3a]" />
      <TitleBar />
      <div className="h-px shrink-0 bg-white" />
      <Console />
      <div className="ml-[2px] mr-px mt-[3px] flex h-[30px] shrink-0 items-center justify-center border-t-2 border-[#bababa] bg-gradient-to-b from-white to-[#cdcdcd] font-['Liberation_Sans',sans-serif] text-[16.500px] font-bold text-black">
        Click the grey bar on top of the window to respond the keyboard input.
      </div>
      <Dock />
      <Taskbar />
    </div>
  );
}
